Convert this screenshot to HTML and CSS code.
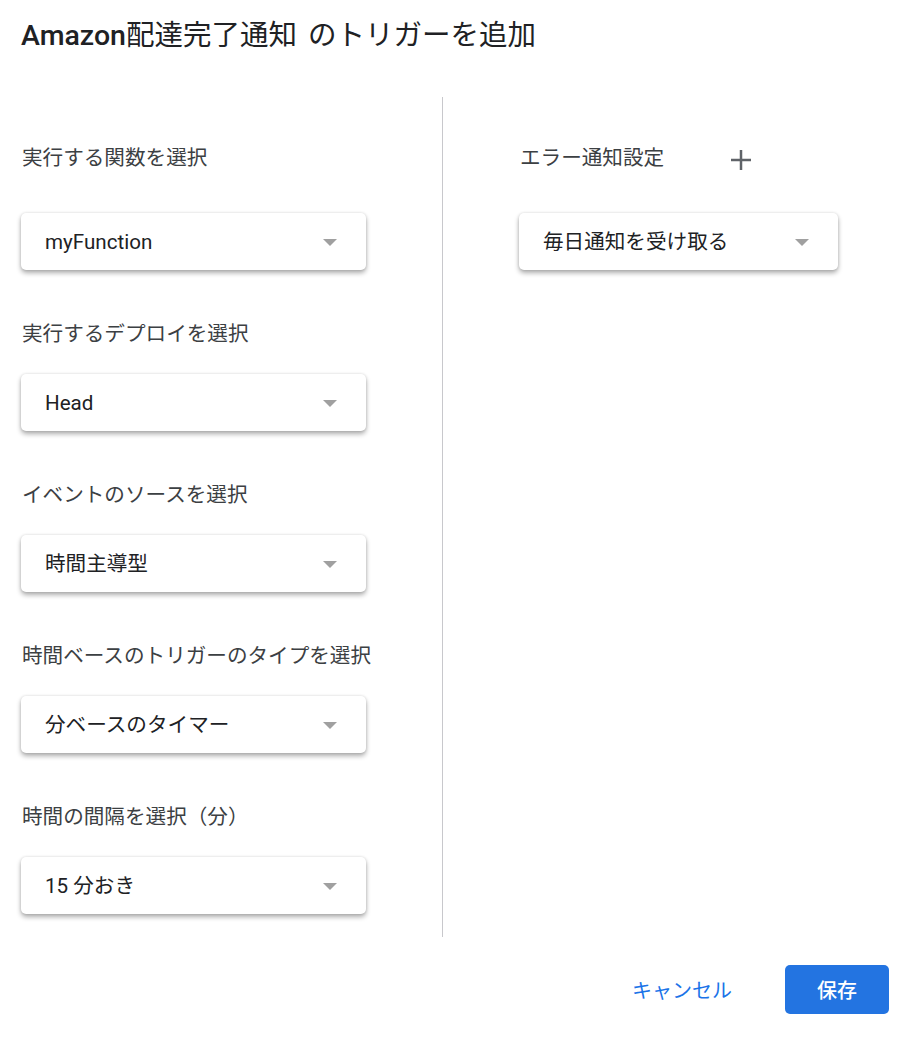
FILE: index.html
```html
<!DOCTYPE html>
<html lang="ja">
<head>
<meta charset="utf-8">
<title>トリガーを追加</title>
<link rel="stylesheet" href="styles.css">
</head>
<body>
<div class="dialog">
  <h1 class="title"><span class="latin">Amazon</span>配達完了通知 のトリガーを追加</h1>
  <div class="columns">
    <div class="col col-left">
      <div class="field first">
        <div class="label">実行する関数を選択</div>
        <div class="select"><span class="value">myFunction</span><span class="caret"></span></div>
      </div>
      <div class="field">
        <div class="label">実行するデプロイを選択</div>
        <div class="select"><span class="value">Head</span><span class="caret"></span></div>
      </div>
      <div class="field">
        <div class="label">イベントのソースを選択</div>
        <div class="select"><span class="value">時間主導型</span><span class="caret"></span></div>
      </div>
      <div class="field">
        <div class="label">時間ベースのトリガーのタイプを選択</div>
        <div class="select"><span class="value">分ベースのタイマー</span><span class="caret"></span></div>
      </div>
      <div class="field">
        <div class="label">時間の間隔を選択（分）</div>
        <div class="select"><span class="value">15 分おき</span><span class="caret"></span></div>
      </div>
    </div>
    <div class="col col-right">
      <div class="field first">
        <div class="label label-row">エラー通知設定
          <svg class="plus" width="22" height="22" viewBox="0 0 22 22"><path d="M11 1v20M1 11h20" stroke="#5f6368" stroke-width="2.5" fill="none"/></svg>
        </div>
        <div class="select select-narrow"><span class="value">毎日通知を受け取る</span><span class="caret"></span></div>
      </div>
    </div>
  </div>
  <div class="footer">
    <button class="btn btn-text">キャンセル</button>
    <button class="btn btn-primary">保存</button>
  </div>
</div>
</body>
</html>
```
FILE: styles.css
```css
* { box-sizing: border-box; }
html, body { margin: 0; padding: 0; background: #fff; }
body {
  font-family: Roboto, "Noto Sans CJK JP", sans-serif;
  color: #202124;
  width: 913px;
  height: 1037px;
  overflow: hidden;
}
.dialog { padding: 0 24px 0 0; }
.title {
  margin: 0;
  padding: 19px 0 0 21px;
  height: 97px;
  font-size: 28.5px;
  line-height: 34px;
  font-weight: 400;
  word-spacing: 4px;
  color: #202124;
}
.title .latin { font-weight: 500; }
.columns {
  display: flex;
  height: 840px;
}
.col { padding-top: 47px; }
.col-left {
  width: 443px;
  padding-left: 21px;
  border-right: 1px solid #c8c8cc;
}
.col-right { padding-left: 76px; flex: 1; }
.field { margin-bottom: 50px; }
.label {
  font-size: 20.6px;
  line-height: 28px;
  color: #3c4043;
  margin-bottom: 26px;
  padding-left: 1px;
}
.field.first .label { margin-bottom: 41px; }
.label-row { display: flex; align-items: center; }
.plus { margin-left: 66px; margin-top: 3px; }
.select {
  width: 345px;
  height: 57px;
  border-radius: 5px;
  background: #fff;
  box-shadow: 0 3px 5px rgba(0, 0, 0, 0.32), 0 0 3px rgba(0, 0, 0, 0.12);
  display: flex;
  align-items: center;
  justify-content: space-between;
  padding: 0 29px 0 24px;
}
.select-narrow { width: 319px; padding-right: 29px; }
.value { font-size: 20.6px; color: #202124; line-height: 28px; }
.caret {
  width: 0; height: 0;
  border-left: 7.5px solid transparent;
  border-right: 7.5px solid transparent;
  border-top: 7.5px solid #a0a0a0;
  margin-top: 1px;
}
.footer {
  display: flex;
  justify-content: flex-end;
  align-items: center;
  margin-top: 28px;
}
.btn {
  font-family: Roboto, "Noto Sans CJK JP", sans-serif;
  font-size: 20px;
  border: none;
  cursor: pointer;
  height: 49px;
  border-radius: 5px;
}
.btn-text {
  background: none;
  color: #1a73e8;
  padding: 0 24px;
  margin-right: 29px;
}
.btn-primary {
  background: #2374e1;
  color: #fff;
  width: 104px;
  font-weight: 500;
}
```
